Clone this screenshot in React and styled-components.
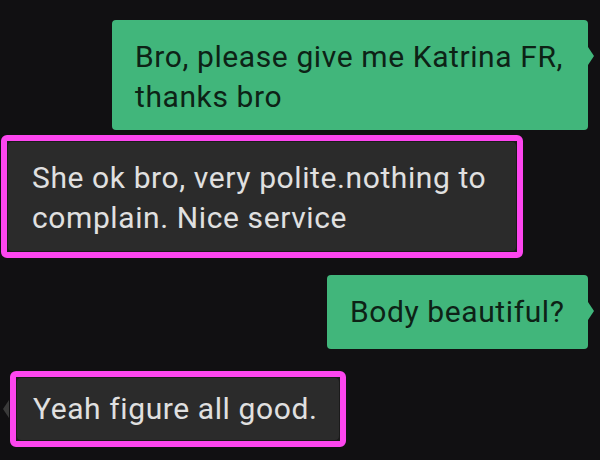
import styled, { createGlobalStyle } from "styled-components";

const GlobalStyle = createGlobalStyle`
  html, body {
    margin: 0;
    padding: 0;
    background: #111012;
  }
  body {
    font-family: Roboto, "Noto Sans", "Liberation Sans", sans-serif;
  }
`;

const messages = [
  {
    id: 1,
    mine: true,
    text: "Bro, please give me Katrina FR, thanks bro",
    width: 476,
    top: 20,
    pad: "17px 18px 13px 23px",
  },
  {
    id: 2,
    mine: false,
    marked: true,
    text: "She ok bro, very polite.nothing to complain. Nice service",
    width: 508,
    top: 5,
    left: 1,
    pad: "16px 12px 13px 24px",
  },
  {
    id: 3,
    mine: true,
    text: "Body beautiful?",
    width: 261,
    top: 17,
    pad: "17px 14px 17px 23px",
  },
  {
    id: 4,
    mine: false,
    marked: true,
    text: "Yeah figure all good.",
    width: 322,
    top: 22,
    left: 10,
    pad: "11px 10px 11px 16px",
  },
];

const Chat = () => {
  return (
    <Wrapper>
      <GlobalStyle />
      {messages.map((m) => {
        const bubble = (
          <Bubble $mine={m.mine} $w={m.width} $pad={m.pad}>
            {m.text}
          </Bubble>
        );
        return (
          <Row key={m.id} $mine={m.mine} $top={m.top} $left={m.left || 0}>
            {m.marked ? <Highlight>{bubble}</Highlight> : bubble}
          </Row>
        );
      })}
    </Wrapper>
  );
};

const Wrapper = styled.main`
  width: 600px;
  height: 460px;
  overflow: hidden;
  display: flex;
  flex-direction: column;
  padding-right: 12px;
  box-sizing: border-box;
`;

const Row = styled.div`
  display: flex;
  justify-content: ${({ $mine }) => ($mine ? "flex-end" : "flex-start")};
  margin-top: ${({ $top }) => $top}px;
  margin-left: ${({ $left }) => $left}px;
`;

const Highlight = styled.div`
  border: 6px solid #fd46ef;
  border-radius: 6px;
  padding: 1px;
  background: #1a1a1a;
`;

const Bubble = styled.div`
  position: relative;
  box-sizing: border-box;
  width: ${({ $w }) => $w}px;
  padding: ${({ $pad }) => $pad};
  border-radius: 4px;
  font-size: 30px;
  letter-spacing: 0.6px;
  line-height: 40px;
  background: ${({ $mine }) => ($mine ? "#41b67b" : "#2b2b2b")};
  color: ${({ $mine }) => ($mine ? "#0d2216" : "#e0e0e0")};

  &::after {
    content: "";
    position: absolute;
    top: ${({ $mine }) => ($mine ? 27 : 22)}px;
    ${({ $mine }) => ($mine ? "right: -6px;" : "left: -14px;")}
    border-top: 9px solid transparent;
    border-bottom: 9px solid transparent;
    ${({ $mine }) =>
      $mine
        ? "border-left: 6px solid #41b67b;"
        : "border-right: 6px solid #3a3a3a;"}
  }
`;

export default Chat;
